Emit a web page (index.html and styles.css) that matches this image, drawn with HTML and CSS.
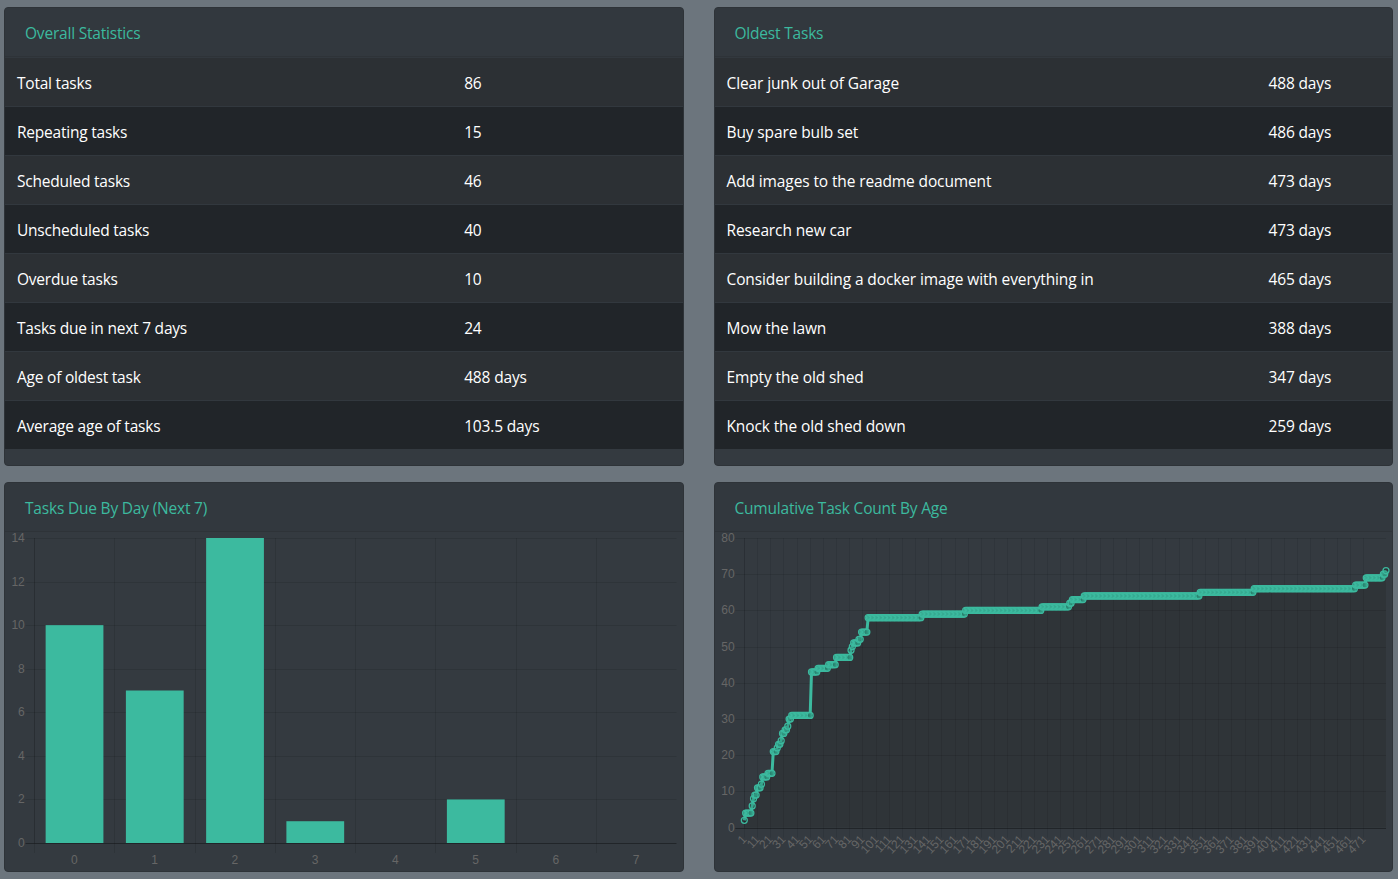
FILE: index.html
```html
<!DOCTYPE html>
<html lang="en">
<head>
<meta charset="utf-8">
<title>Task Statistics</title>
<link rel="stylesheet" href="styles.css">
</head>
<body>
<main class="dashboard">
  <section class="card">
    <h2 class="card-header">Overall Statistics</h2>
    <table class="table table-stats">
      <tr><td>Total tasks</td><td>86</td></tr>
      <tr><td>Repeating tasks</td><td>15</td></tr>
      <tr><td>Scheduled tasks</td><td>46</td></tr>
      <tr><td>Unscheduled tasks</td><td>40</td></tr>
      <tr><td>Overdue tasks</td><td>10</td></tr>
      <tr><td>Tasks due in next 7 days</td><td>24</td></tr>
      <tr><td>Age of oldest task</td><td>488 days</td></tr>
      <tr><td>Average age of tasks</td><td>103.5 days</td></tr>
    </table>
  </section>
  <section class="card">
    <h2 class="card-header">Oldest Tasks</h2>
    <table class="table table-oldest">
      <tr><td>Clear junk out of Garage</td><td>488 days</td></tr>
      <tr><td>Buy spare bulb set</td><td>486 days</td></tr>
      <tr><td>Add images to the readme document</td><td>473 days</td></tr>
      <tr><td>Research new car</td><td>473 days</td></tr>
      <tr><td>Consider building a docker image with everything in</td><td>465 days</td></tr>
      <tr><td>Mow the lawn</td><td>388 days</td></tr>
      <tr><td>Empty the old shed</td><td>347 days</td></tr>
      <tr><td>Knock the old shed down</td><td>259 days</td></tr>
    </table>
  </section>
  <section class="card">
    <h2 class="card-header">Tasks Due By Day (Next 7)</h2>
    <svg class="chart" id="due-chart" width="677" height="339"></svg>
  </section>
  <section class="card">
    <h2 class="card-header">Cumulative Task Count By Age</h2>
    <svg class="chart" id="age-chart" width="677" height="339"></svg>
  </section>
</main>
<script src="charts.js"></script>
</body>
</html>
```
FILE: styles.css
```css
* { box-sizing: border-box; }
body {
  margin: 0;
  background: #6c757d;
  color: #fff;
  font: 15.5px/24px "Open Sans", "Noto Sans", sans-serif;
  letter-spacing: -.15px;
}
.dashboard {
  display: grid;
  grid-template-columns: 1fr 1fr;
  grid-template-rows: 459px 390px;
  gap: 16px 30px;
  padding: 7px 5px 7px 4px;
}
.card {
  background: #343a40;
  border: 1px solid #2e3338;
  border-radius: 4px;
  overflow: hidden;
}
.card-header {
  margin: 0;
  padding: 13px 20px 11px;
  border-bottom: 1px solid #2e3338;
  background: #32383e;
  color: #3cba9f;
  font-size: 15.5px;
  font-weight: 400;
  line-height: 24px;
  letter-spacing: -.2px;
}
.table {
  width: 100%;
  border-collapse: separate;
  border-spacing: 0;
  table-layout: fixed;
  background: #212529;
}
.table tr:nth-child(odd) { background: #2c3034; }
.table td {
  height: 49px;
  padding: 13px 12px 11px;
  border-top: 1px solid #32383e;
  white-space: nowrap;
}
.table-stats td:first-child {
  width: 66%;
  letter-spacing: -.22px;
}
.table-oldest td:first-child {
  width: 80%;
  letter-spacing: -.12px;
}
.chart {
  display: block;
  letter-spacing: 0;
}
.grid { stroke: rgba(0, 0, 0, .1); }
.grid-fine { stroke: rgba(0, 0, 0, .08); }
.zero { stroke: rgba(0, 0, 0, .35); }
.tick {
  fill: #666;
  font: 12px "Liberation Sans", Arial, sans-serif;
}
.tick-end { text-anchor: end; }
.tick-mid { text-anchor: middle; }
.bar { fill: #3cba9f; }
.area { fill: #2f3437; fill-opacity: .85; }
.line {
  fill: none;
  stroke: #3cba9f;
  stroke-width: 3;
  stroke-linejoin: round;
}
.point {
  fill: rgba(0, 0, 0, .1);
  stroke: #3cba9f;
  stroke-width: 1.25;
}
```
FILE: charts.js
```js
const NS = "http://www.w3.org/2000/svg";

function add(svg, name, attrs, text) {
  const el = document.createElementNS(NS, name);
  for (const key in attrs) el.setAttribute(key, attrs[key]);
  if (text !== undefined) el.textContent = text;
  svg.appendChild(el);
}

function line(svg, cls, x1, y1, x2, y2) {
  add(svg, "line", { class: cls, x1, y1, x2, y2 });
}

const crisp = v => Math.floor(v) + 0.5;

function drawYAxis(svg, max, step, left, right, top, bottom) {
  for (let v = 0; v <= max; v += step) {
    const y = crisp(bottom - (v / max) * (bottom - top));
    line(svg, v ? "grid" : "zero", left - 9, y, right, y);
    add(svg, "text", { class: "tick tick-end", x: left - 9.7, y: y + 3.7 }, v);
  }
}

function drawDueChart() {
  const svg = document.getElementById("due-chart");
  const values = [10, 7, 14, 1, 0, 2, 0, 0];
  const left = 29.5, right = 671.5, top = 6, bottom = 311;
  const slot = (right - left) / values.length;
  values.forEach((v, i) => {
    const x = crisp(left + i * slot);
    line(svg, "grid", x, top, x, bottom + 10);
    add(svg, "text", { class: "tick tick-mid", x: left + (i + 0.5) * slot - 0.3, y: 332 }, i);
  });
  line(svg, "grid", left, top, left, bottom);
  drawYAxis(svg, 14, 2, left, right, top + 0.6, bottom + 0.1);
  values.forEach((v, i) => {
    const h = v / 14 * (bottom - top);
    add(svg, "rect", { class: "bar", x: left + (i + 0.14) * slot - 0.1, y: bottom - h, width: slot * 0.72, height: h });
  });
}

function drawAgeChart() {
  const svg = document.getElementById("age-chart");
  /* [first day, cumulative count from that day on] */
  const steps = [[1, 2], [2, 4], [7, 6], [8, 8], [9, 9], [11, 11], [14, 12], [15, 14],
    [19, 15], [23, 21], [26, 22], [27, 23], [29, 24], [30, 26], [32, 27], [34, 28],
    [35, 30], [37, 31], [52, 43], [57, 44], [65, 45], [71, 47], [82, 49], [83, 50],
    [84, 51], [88, 52], [90, 54], [95, 58], [136, 59], [169, 60], [227, 61], [248, 62],
    [250, 63], [259, 64], [347, 65], [388, 66], [465, 67], [473, 69], [486, 70], [488, 71]];
  const left = 29.3, right = 671, top = 6, bottom = 295.6;
  const unit = (right - left) / 487;

  const points = [];
  let s = 0;
  for (let day = 1; day <= 488; day++) {
    if (s + 1 < steps.length && steps[s + 1][0] <= day) s++;
    points.push([left + (day - 1) * unit, bottom - steps[s][1] / 80 * (bottom - top)]);
  }
  const path = "M" + points.map(p => p[0].toFixed(2) + " " + p[1].toFixed(2)).join("L");
  add(svg, "path", { class: "area", d: `${path}L${right} ${bottom}L${left} ${bottom}Z` });

  for (let day = 1; day <= 471; day += 10) {
    const x = crisp(left + (day - 1) * unit);
    line(svg, "grid-fine", x, top, x, bottom + 10);
    const y = bottom + 9.5;
    add(svg, "text", { class: "tick tick-end", x, y: y + 4, transform: `rotate(-47 ${x} ${y})` }, day);
  }
  line(svg, "grid", left + 0.2, top, left + 0.2, bottom);
  drawYAxis(svg, 80, 10, left, right, top + 0.3, bottom + 0.6);

  add(svg, "path", { class: "line", d: path });
  points.forEach(p => add(svg, "circle", { class: "point", cx: p[0], cy: p[1], r: 3 }));
}

drawDueChart();
drawAgeChart();
```
